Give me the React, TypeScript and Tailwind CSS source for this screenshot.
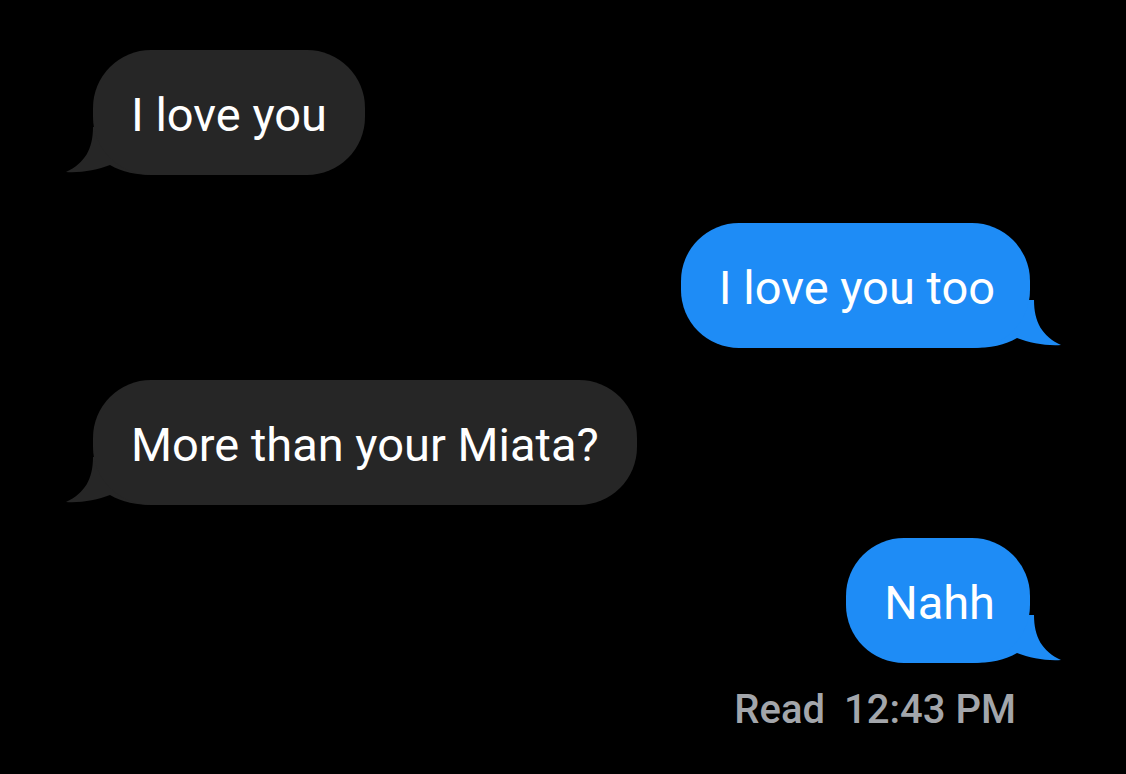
import React from "react";

type Msg = { text: string; mine: boolean; mt: string };

const messages: Msg[] = [
  { text: "I love you", mine: false, mt: "mt-[50px]" },
  { text: "I love you too", mine: true, mt: "mt-[48px]" },
  { text: "More than your Miata?", mine: false, mt: "mt-[32px]" },
  { text: "Nahh", mine: true, mt: "mt-[33px]" },
];

function Tail({ color, mine }: { color: string; mine: boolean }) {
  // drawn for the left side, flipped for sent messages
  return (
    <svg
      width="90"
      height="48"
      viewBox="0 0 90 48"
      className={
        mine
          ? "absolute bottom-0 right-[-31px] -scale-x-100"
          : "absolute bottom-0 left-[-27px]"
      }
    >
      <path
        d="M27 0 C27 22 19 36 0 45 C15 46 31 43 44 38 C56 45 70 48 90 48 L90 0 Z"
        fill={color}
      />
    </svg>
  );
}

function Bubble({ msg }: { msg: Msg }) {
  const color = msg.mine ? "#1e8cf6" : "#262626";
  return (
    <div className={`flex ${msg.mine ? "justify-end" : "justify-start"} ${msg.mt}`}>
      <div className="relative">
        <Tail color={color} mine={msg.mine} />
        <div
          className={`relative h-[125px] flex items-center rounded-[58px] text-[47px] text-white leading-none ${
            msg.mine ? "bg-[#1e8cf6] pl-[38px] pr-[35px]" : "bg-[#262626] px-[38px]"
          }`}
        >
          <span className="mt-[3px]">{msg.text}</span>
        </div>
      </div>
    </div>
  );
}

export default function App() {
  return (
    <main
      className="h-[774px] bg-black overflow-hidden pl-[93px] pr-[96px]"
      style={{ fontFamily: "Roboto, 'Noto Sans', sans-serif" }}
    >
      {messages.map((m, i) => (
        <Bubble key={i} msg={m} />
      ))}
      <div className="flex justify-end mt-[27px] pr-[14px] text-[40px] font-medium text-[#a3a6ab] leading-none gap-[19px]">
        <span>Read</span>
        <span>12:43 PM</span>
      </div>
    </main>
  );
}
